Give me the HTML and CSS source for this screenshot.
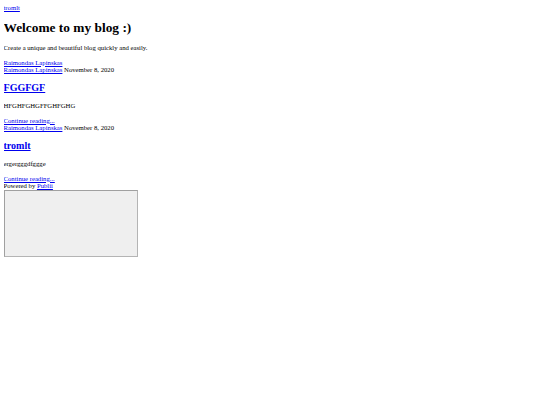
FILE: index.html
```html
<!DOCTYPE html>
<html class="page">
<head>
<meta charset="utf-8">
<title>Welcome to my blog :)</title>
<link rel="stylesheet" href="styles.css">
</head>
<body class="site">
<header class="top"><a href="#" class="logo">tromlt</a></header>
<main class="main">
<div class="hero">
<h1 class="hero-title">Welcome to my blog :)</h1>
<p class="hero-text">Create a unique and beautiful blog quickly and easily.</p>
</div>
<div class="authors"><a href="#">Raimondas Lapinskas</a></div>
<article class="post">
<div class="meta"><a href="#">Raimondas Lapinskas</a> <time>November 8, 2020</time></div>
<h2 class="post-title"><a href="#">FGGFGF</a></h2>
<p class="post-text">HFGHFGHGFFGHFGHG</p>
<a href="#" class="more">Continue reading...</a>
</article>
<article class="post">
<div class="meta"><a href="#">Raimondas Lapinskas</a> <time>November 8, 2020</time></div>
<h2 class="post-title"><a href="#">tromlt</a></h2>
<p class="post-text">ergergggdfggge</p>
<a href="#" class="more">Continue reading...</a>
</article>
</main>
<footer class="footer">
<div class="powered">Powered by <a href="#">Publii</a></div>
<div class="frame"></div>
</footer>
</body>
</html>
```

FILE: styles.css
```css
.page {
  background: #fff;
}
.site {
  margin: 3.52px;
  font-family: "Liberation Serif", "Times New Roman", serif;
  font-size: 6.69px;
  line-height: 1.149;
  color: #000;
}
a {
  color: #0000ee;
}
.hero-title {
  font-size: 2em;
  margin: 0.67em 0;
}
.hero-text, .post-text {
  margin: 1em 0;
}
.post-title {
  font-size: 1.5em;
  margin: 0.83em 0;
}
.frame {
  width: 132px;
  height: 65px;
  border: 1px solid #b4b4b4;
  border-top-color: #a0a0a0;
  border-left-color: #a0a0a0;
  background: #efefef;
}
```
